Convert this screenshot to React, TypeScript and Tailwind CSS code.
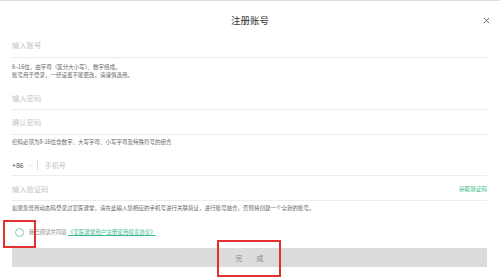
import React from "react";

const font = { fontFamily: '"Noto Sans CJK SC", "Noto Sans", sans-serif' };

function Field({ children, className = "" }: { children: React.ReactNode; className?: string }) {
  return (
    <div className={`flex items-center border-b border-[#ececec] ${className}`}>{children}</div>
  );
}

export default function App() {
  return (
    <div
      style={font}
      className="relative h-[277px] w-[500px] overflow-hidden border-t border-[#dedede] bg-white"
    >
      {/* header */}
      <div className="relative h-[32px] pt-[14px]">
        <div className="text-center text-[9.5px] leading-[10px] text-[#333]">注册账号</div>
        <button className="absolute right-[10px] top-[16px] flex h-[7px] w-[7px] items-center justify-center">
          <svg viewBox="0 0 8 8" className="h-[7px] w-[7px]">
            <path d="M1 1 L7 7 M7 1 L1 7" stroke="#666" strokeWidth="1.1" fill="none" />
          </svg>
        </button>
      </div>

      <div className="pl-[12px] pr-[13px]">
        <Field className="h-[25px]">
          <span className="text-[7.3px] leading-[8px] text-[#c4c4c4]">输入账号</span>
        </Field>
        <div className="mt-[5px] text-[5.5px] leading-[8px] text-[#666]">
          <div>6~16位，由字母（区分大小写）、数字组成。</div>
          <div>账号用于登录，一经设置不能更改，请谨慎选用。</div>
        </div>

        <Field className="mt-[7px] h-[24px]">
          <span className="text-[7.3px] leading-[8px] text-[#c4c4c4]">输入密码</span>
        </Field>
        <Field className="h-[25px]">
          <span className="text-[7.3px] leading-[8px] text-[#c4c4c4]">确认密码</span>
        </Field>
        <div className="mt-[3px] text-[5.5px] leading-[8px] text-[#666]">
          密码必须为8-16位含数字、大写字母、小写字母及特殊符号的组合
        </div>

        <Field className="mt-[9px] h-[21px]">
          <span className="text-[7px] leading-[8px] text-[#555]">+86</span>
          <svg viewBox="0 0 8 5" className="ml-[4px] h-[3px] w-[6px]">
            <path d="M0.5 0.5 L4 4 L7.5 0.5" stroke="#bdbdbd" strokeWidth="0.9" fill="none" />
          </svg>
          <span className="ml-[3px] h-[10px] w-px bg-[#dddddd]" />
          <span className="ml-[7px] text-[7px] leading-[8px] text-[#c4c4c4]">手机号</span>
        </Field>

        <Field className="mt-[2px] h-[23px] justify-between">
          <span className="text-[7.3px] leading-[8px] text-[#c4c4c4]">输入验证码</span>
          <span className="text-[5.6px] leading-[8px] text-[#3dbb8b]">获取验证码</span>
        </Field>
        <div className="mt-[3px] text-[5.5px] leading-[8px] text-[#666]">
          如果您曾用动态码登录过掌医课堂，请在此输入您相应的手机号进行关联验证，进行账号融合，否则将创建一个全新的账号。
        </div>

        <div className="mt-[15px] flex h-[10px] items-center">
          <span className="ml-[3px] h-[9px] w-[9px] rounded-full border border-[#7ccfb0]" />
          <span className="ml-[5px] text-[5.4px] leading-[8px] text-[#888]">我已阅读并同意</span>
          <span className="ml-[1px] text-[5.5px] leading-[8px] text-[#3dbb8b] underline">
            《掌医课堂用户注册使用权责协议》
          </span>
        </div>

        <div className="mt-[11px] flex h-[19px] items-center justify-center bg-[#dcdcdc]">
          <span className="pl-[14px] text-[7px] leading-[8px] tracking-[14px] text-[#8a8a8a]">完成</span>
        </div>
      </div>

      {/* annotation boxes */}
      <div className="absolute left-[3px] top-[219px] h-[28px] w-[33px] border-2 border-[#e2312f]" />
      <div className="absolute left-[217px] top-[239px] h-[37px] w-[64px] border-2 border-[#e2312f]" />
    </div>
  );
}
